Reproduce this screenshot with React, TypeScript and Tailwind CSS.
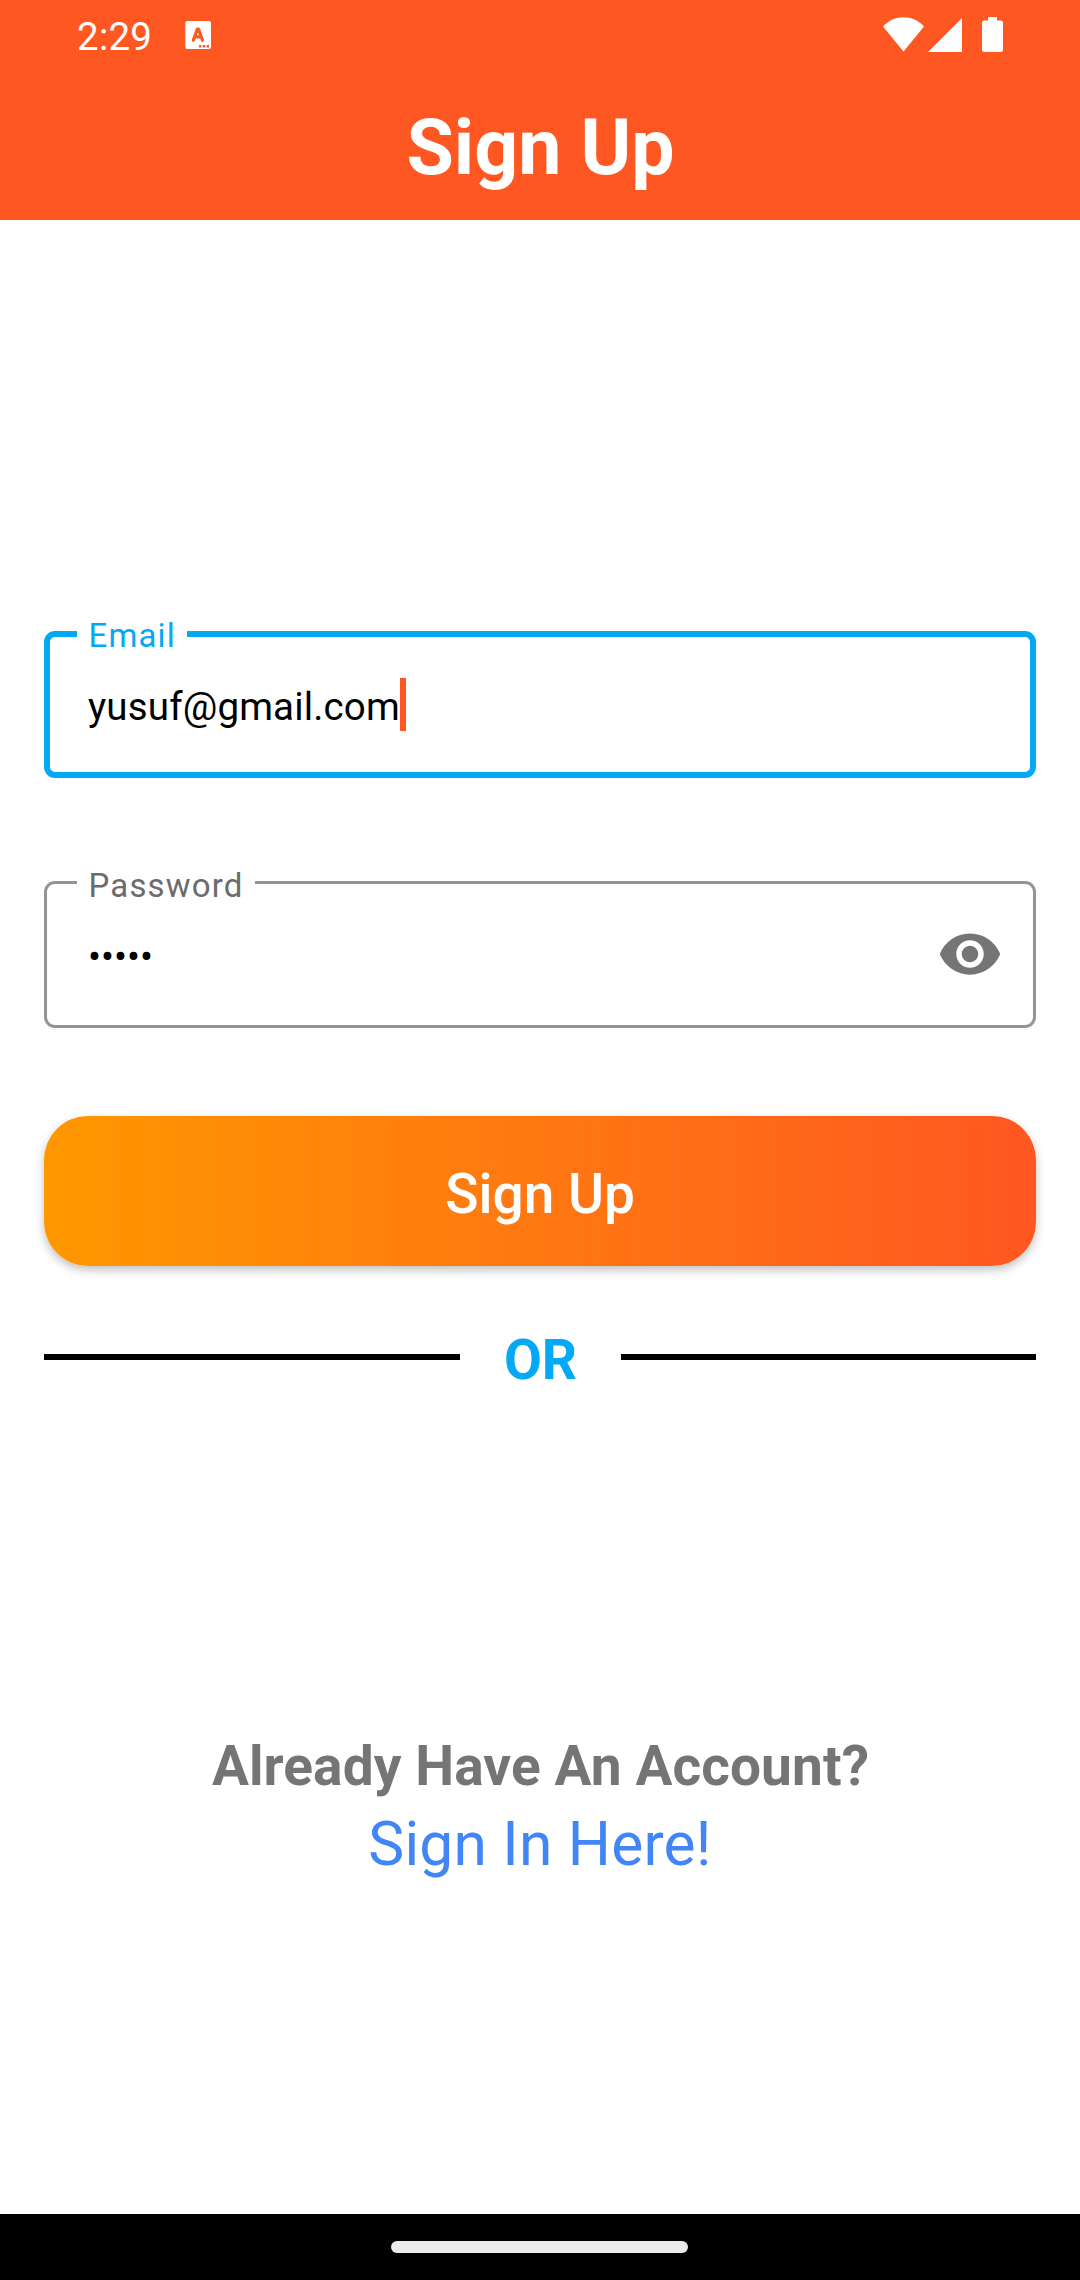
import type { ReactNode } from 'react';

function StatusBar() {
  return (
    <div className="flex h-[70px] shrink-0 items-center justify-between pr-[77px] pl-[77px] text-white">
      <div className="flex items-center">
        <span className="w-[108px] pt-[3px] text-[38.5px] leading-[48px] tracking-[0.25px]">2:29</span>
        <svg className="h-7 w-[26px]" viewBox="0 0 26 28">
          <rect x="0.300" width="25.700" height="28" rx="2" fill="#fff" />
          <path d="M8.300 19.300 12.300 8.200h1.200l4 11.100M9.800 15.800h6.500" fill="none" stroke="#ff5722" strokeWidth="3.200" strokeLinecap="round" strokeLinejoin="round" />
          <path d="M14 24h2.400v2.400h-2.400zM17.800 24h2.400v2.400h-2.400zM21.600 24h2.400v2.400h-2.400z" fill="#ff5722" />
        </svg>
      </div>
      <svg className="h-9 w-[120px]" viewBox="0 0 120 36" fill="#fff">
        <path d="M0 9.500C11-2.800 30-2.800 41 9.500L20.500 34.500Z" />
        <path d="M45 35 79 1v34Z" />
        <path d="M105 0h9v3.500h3.500a2.500 2.500 0 0 1 2.500 2.500v26.500a2.500 2.500 0 0 1-2.500 2.500h-16a2.500 2.500 0 0 1-2.500-2.500V6a2.500 2.500 0 0 1 2.500-2.500h3.500Z" />
      </svg>
    </div>
  );
}

function Field({ label, focused, children }: { label: string; focused?: boolean; children: ReactNode }) {
  return (
    <div
      className={
        focused
          ? 'relative flex h-[147px] items-center rounded-[11px] border-[6px] border-[#03a9f4] pr-[27px] pl-[38px]'
          : 'relative flex h-[147px] items-center rounded-[11px] border-[3px] border-[#949494] pr-[30px] pl-[41px]'
      }
    >
      <span
        className={
          focused
            ? 'absolute -top-[21px] left-[27px] w-[110px] bg-white pl-[11.5px] text-[33px] leading-[40px] tracking-[1.15px] text-[#03a9f4]'
            : 'absolute -top-[18px] left-[30px] w-[178px] bg-white pl-[11.5px] text-[33px] leading-[40px] tracking-[1.15px] text-[#6b6b6b]'
        }
      >
        {label}
      </span>
      {children}
    </div>
  );
}

export default function App() {
  return (
    <div className="flex h-[2280px] w-[1080px] flex-col bg-white font-['Roboto',sans-serif]">
      <header className="flex h-[220px] shrink-0 flex-col bg-[#ff5722]">
        <StatusBar />
        <h1 className="pt-[33px] pl-px text-center text-[77px] leading-[90px] font-bold text-white">Sign Up</h1>
      </header>

      <main className="flex grow flex-col px-11 pt-[411px]">
        <Field label="Email" focused>
          <span className="pt-[4px] text-[38.5px] leading-[53px] tracking-[0.15px] text-black">yusuf@gmail.com</span>
          <span className="h-[53px] w-[6px] bg-[#ff5722]" />
        </Field>

        <div className="mt-[103px]">
          <Field label="Password">
            <span className="grow pt-[3px] text-[38.5px] leading-[53px] text-black">•••••</span>
            <svg className="mb-[2px] h-[66px] w-[66px]" viewBox="0 0 24 24" fill="#757575">
              <path d="M12 4.500C7 4.500 2.730 7.610 1 12c1.730 4.390 6 7.500 11 7.500s9.270-3.110 11-7.500c-1.730-4.390-6-7.500-11-7.500zM12 17c-2.760 0-5-2.240-5-5s2.240-5 5-5 5 2.240 5 5-2.240 5-5 5zm0-8c-1.660 0-3 1.340-3 3s1.340 3 3 3 3-1.340 3-3-1.340-3-3-3z" />
            </svg>
          </Field>
        </div>

        <button className="mt-[88px] h-[150px] shrink-0 rounded-[44px] bg-linear-to-r/srgb from-[#ff9800] to-[#ff5722] pt-[6px] text-[55px] font-medium text-white shadow-[0_4px_10px_rgba(0,0,0,0.25)]">
          Sign Up
        </button>

        <div className="mt-[58px] flex h-[66px] items-center justify-between">
          <span className="h-[6px] w-[416px] bg-black" />
          <span className="pt-[6px] text-[55px] leading-[60px] font-bold text-[#03a9f4]">OR</span>
          <span className="h-[6px] w-[415px] bg-black" />
        </div>

        <div className="mt-[343px] flex flex-col items-center">
          <p className="pl-px text-[55px] leading-[66px] font-bold tracking-[0.1px] text-[#757575]">Already Have An Account?</p>
          <a className="mt-[8px] text-[60.5px] leading-[76px] tracking-[0.2px] text-[#4285f4]">Sign In Here!</a>
        </div>
      </main>

      <footer className="flex h-[66px] shrink-0 items-center justify-center bg-black pr-[2px]">
        <span className="h-3 w-[297px] rounded-full bg-[#ebebeb]" />
      </footer>
    </div>
  );
}
